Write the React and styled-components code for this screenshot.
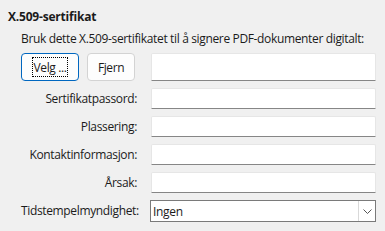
import React from "react";
import styled, { createGlobalStyle } from "styled-components";

const Global = createGlobalStyle`
  html, body { margin: 0; padding: 0; background: #f0f0f0; }
  body { font-family: "Open Sans", "Noto Sans", sans-serif; font-size: 12px; color: #1b1b1b; }
`;

const Page = styled.div`
  width: 385px;
  height: 231px;
  box-sizing: border-box;
  padding: 9px 9px 0 8px;
  background: #f0f0f0;
`;

const Title = styled.div`
  font-weight: 700;
  font-size: 12px;
  line-height: 16px;
  letter-spacing: -0.2px;
`;

const Desc = styled.div`
  margin: 6px 0 0 13px;
  line-height: 16px;
  letter-spacing: -0.35px;
`;

const Form = styled.div`
  display: grid;
  grid-template-columns: 116px 225px;
  column-gap: 14px;
  grid-template-rows: 28px 21px 21px 21px 21px 22px;
  row-gap: 7px;
  margin: 6px 0 0 13px;
`;

const Buttons = styled.div`
  display: flex;
  gap: 8px;
`;

const Button = styled.button`
  box-sizing: border-box;
  height: 28px;
  width: ${(p) => p.$w}px;
  padding: 0;
  border-radius: 4px;
  border: 1px solid ${(p) => (p.$primary ? "#0067c0" : "#d3d3d3")};
  background: #fdfdfd;
  font-family: inherit;
  font-size: 12px;
  color: #1b1b1b;
  letter-spacing: -0.4px;
  display: flex;
  align-items: center;
  justify-content: center;
`;

const Focus = styled.span`
  display: inline-flex;
  align-items: center;
  justify-content: center;
  box-sizing: border-box;
  padding: 0 1px;
  height: 20px;
  white-space: nowrap;
  border: 1px dotted #000;
`;

const Label = styled.div`
  text-align: right;
  align-self: center;
  white-space: nowrap;
  line-height: 16px;
  letter-spacing: -0.35px;
`;

const Field = styled.div`
  box-sizing: border-box;
  background: #fff;
  border: 1px solid #e6e6e6;
  border-bottom: 1px solid #868686;
  border-radius: 2px 2px 0 0;
`;

const Combo = styled.div`
  box-sizing: border-box;
  margin-left: -1px;
  background: #fff;
  border: 1px solid #7a7a7a;
  display: flex;
  align-items: center;
  padding-left: 2px;
  letter-spacing: -0.3px;
`;

const ComboText = styled.span`
  flex: 1;
`;

const Arrow = styled.div`
  box-sizing: border-box;
  width: 17px;
  height: 20px;
  border-left: 1px solid #d9d9d9;
  display: flex;
  align-items: center;
  justify-content: center;
`;

export default function App() {
  const rows = ["Sertifikatpassord:", "Plassering:", "Kontaktinformasjon:", "Årsak:"];
  return (
    <>
      <Global />
      <Page>
        <Title>X.509-sertifikat</Title>
        <Desc>Bruk dette X.509-sertifikatet til å signere PDF-dokumenter digitalt:</Desc>
        <Form>
          <Buttons>
            <Button $primary $w={58}>
              <Focus>Velg ...</Focus>
            </Button>
            <Button $w={48}>Fjern</Button>
          </Buttons>
          <Field />
          {rows.map((r) => (
            <React.Fragment key={r}>
              <Label>{r}</Label>
              <Field />
            </React.Fragment>
          ))}
          <Label>Tidstempelmyndighet:</Label>
          <Combo>
            <ComboText>Ingen</ComboText>
            <Arrow>
              <svg width="9" height="5" viewBox="0 0 9 5">
                <path d="M0.5 0.5 L4.5 4.5 L8.5 0.5" fill="none" stroke="#555" strokeWidth="1" />
              </svg>
            </Arrow>
          </Combo>
        </Form>
      </Page>
    </>
  );
}
